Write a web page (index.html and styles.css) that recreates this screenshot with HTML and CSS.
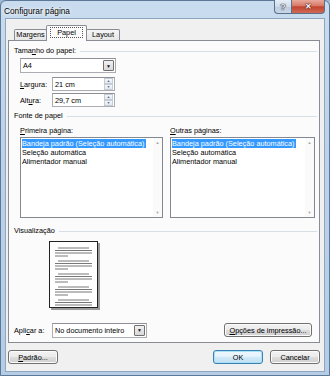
FILE: index.html
```html
<!DOCTYPE html>
<html lang="pt">
<head>
  <meta charset="UTF-8" />
  <title>Configurar página</title>
  <link rel="stylesheet" href="styles.css">
</head>
<body>
  <div class="window">
    <div class="titlebar">
      <span class="title">Configurar página</span>
      <div class="caption">
        <span class="cap help">?</span>
        <span class="cap close">✕</span>
      </div>
    </div>

    <div class="client">
      <div class="tabs">
        <span class="tab">Margens</span>
        <span class="tab active"><span class="focus">Papel</span></span>
        <span class="tab">Layout</span>
      </div>

      <div class="panel">
        <div class="group-title"><span>Tama<u>n</u>ho do papel:</span><i></i></div>
        <div class="indent">
          <div class="combo size-combo">
            <span class="value">A4</span>
            <span class="drop">▼</span>
          </div>
          <div class="field-row first">
            <span class="field-label"><u>L</u>argura:</span>
            <div class="spin">
              <span class="value">21 cm</span>
              <span class="spin-btns"><b>▲</b><b>▼</b></span>
            </div>
          </div>
          <div class="field-row">
            <span class="field-label">Alt<u>u</u>ra:</span>
            <div class="spin">
              <span class="value">29,7 cm</span>
              <span class="spin-btns"><b>▲</b><b>▼</b></span>
            </div>
          </div>
        </div>

        <div class="group-title source"><span>Fonte de papel</span><i></i></div>
        <div class="lists">
          <div class="list-col left-col">
            <span class="list-label"><u>P</u>rimeira página:</span>
            <div class="listbox">
              <ul>
                <li><span class="sel">Bandeja padrão (Seleção automática)</span></li>
                <li>Seleção automática</li>
                <li>Alimentador manual</li>
              </ul>
              <div class="scroll"><b>▲</b><b>▼</b></div>
            </div>
          </div>
          <div class="list-col right-col">
            <span class="list-label"><u>O</u>utras páginas:</span>
            <div class="listbox">
              <ul>
                <li><span class="sel">Bandeja padrão (Seleção automática)</span></li>
                <li>Seleção automática</li>
                <li>Alimentador manual</li>
              </ul>
              <div class="scroll"><b>▲</b><b>▼</b></div>
            </div>
          </div>
        </div>

        <div class="group-title preview-title"><span>Visualização</span><i></i></div>
        <div class="preview">
          <svg width="52" height="70" viewBox="0 0 52 70">
            <rect x="2" y="2" width="49" height="67" fill="#9a9a9a" />
            <rect x="0.5" y="0.5" width="48" height="66" fill="#fff" stroke="#222" />
            <g stroke="#555" stroke-width="0.8">
              <path d="M9 7H40M6 9.5H43M6 12H43M6 15H19" />
              <path d="M9 20H40M6 22.5H43M6 25H43M6 28H19" />
              <path d="M9 33H40M6 35.5H43M6 38H43M6 41H19" />
              <path d="M9 46H40M6 48.5H43M6 51H43M6 54H19" />
              <path d="M9 59H40M6 61.5H43M6 64H43" />
            </g>
          </svg>
        </div>

        <div class="apply-row">
          <span class="field-label">Apli<u>c</u>ar a:</span>
          <div class="combo apply-combo">
            <span class="value">No documento inteiro</span>
            <span class="drop">▼</span>
          </div>
          <span class="btn options"><u>O</u>pções de impressão...</span>
        </div>
      </div>

      <div class="buttons">
        <span class="btn"><u>P</u>adrão...</span>
        <span class="btn default ok">OK</span>
        <span class="btn">Cancelar</span>
      </div>
    </div>
  </div>
</body>
</html>
```

FILE: styles.css
```css
* {
  box-sizing: border-box;
}

body {
  margin: 0;
  width: 330px;
  height: 376px;
  font-family: "Liberation Sans", Arial, sans-serif;
  font-size: 7.3px;
  color: #000;
  background: #9fb8d4;
}

u {
  text-decoration: underline;
  text-underline-offset: 1px;
}

.window {
  width: 330px;
  height: 376px;
  display: flex;
  flex-direction: column;
  border: 1px solid #5d7896;
  border-radius: 6px 6px 0 0;
  background: linear-gradient(180deg, #c9dcef 0%, #bcd2ea 40%, #b4cce6 100%);
}

.titlebar {
  height: 17px;
  display: flex;
  justify-content: space-between;
  flex-shrink: 0;
}

.title {
  padding: 5px 0 0 3px;
  font-size: 8.3px;
  line-height: 10px;
  text-shadow: 0 0 4px #fff, 0 0 2px #fff;
}

.caption {
  display: flex;
  margin-right: 4px;
  margin-top: -1px;
}

.cap {
  height: 14px;
  display: flex;
  align-items: center;
  justify-content: center;
  border: 1px solid #5a6f88;
  border-top: none;
  font-weight: bold;
}

.help {
  width: 17px;
  border-right: none;
  border-radius: 0 0 0 4px;
  background: linear-gradient(180deg, #e6eef7 0%, #d0dceb 50%, #bccbdd 51%, #c9d7e8 100%);
  color: #e8eef5;
  font-size: 9px;
  text-shadow: 0 0 1px #333, 0 0 1px #333, 0 0 1px #333;
}

.close {
  width: 34px;
  border-radius: 0 0 4px 0;
  background: linear-gradient(180deg, #e9a99b 0%, #d77866 45%, #c14430 52%, #d26a55 100%);
  color: #fff;
  font-size: 8px;
  text-shadow: 0 0 1px #4a0f08, 0 0 1px #4a0f08, 0 0 1px #4a0f08;
}

.client {
  flex: 1;
  margin: 0 4px 3px 4px;
  display: flex;
  flex-direction: column;
  padding: 6px 4px 7px 2px;
  border: 1px solid #90a6bf;
  background: #f0f0f0;
}

.tabs {
  height: 15px;
  display: flex;
  align-items: flex-end;
  padding-left: 6px;
  flex-shrink: 0;
}

.tab {
  height: 11px;
  line-height: 10px;
  text-align: center;
  border: 1px solid #898c95;
  border-bottom: none;
  border-radius: 2px 2px 0 0;
  background: linear-gradient(180deg, #f6f6f6 0%, #e6e6e6 100%);
}

.tab:first-child {
  width: 33px;
}

.tab:last-child {
  width: 34px;
  margin-left: -1px;
}

.tab.active {
  position: relative;
  z-index: 1;
  width: 41px;
  height: 16px;
  margin-left: -1px;
  margin-bottom: -1px;
  padding-top: 2px;
  background: #fbfbfb;
}

.focus {
  display: inline-block;
  padding: 0 6px;
  line-height: 9px;
  outline: 1px dotted #555;
  outline-offset: 0;
}

.panel {
  flex: 1;
  display: flex;
  flex-direction: column;
  padding: 5px 2px 5px 5px;
  border: 1px solid #898c95;
  background: #fbfbfb;
}

.group-title {
  display: flex;
  align-items: center;
  height: 10px;
  line-height: 10px;
}

.group-title i {
  flex: 1;
  height: 1px;
  margin-left: 4px;
  background: #d5dfe5;
}

.indent {
  padding-left: 6px;
}

.combo,
.spin {
  display: flex;
  align-items: center;
  border: 1px solid #abadb3;
  border-top-color: #8e9096;
  background: #fff;
}

.value {
  flex: 1;
  padding-left: 2px;
  white-space: nowrap;
}

.size-combo {
  width: 96px;
  height: 15px;
  margin-top: 2px;
}

.drop {
  width: 11px;
  height: 11px;
  margin-right: 1px;
  display: flex;
  align-items: center;
  justify-content: center;
  border: 1px solid #707070;
  border-radius: 1px;
  background: linear-gradient(180deg, #f2f2f2 0%, #e4e4e4 50%, #d8d8d8 100%);
  font-size: 5px;
  color: #111;
}

.field-row {
  display: flex;
  align-items: center;
  height: 14px;
  margin-top: 2px;
}

.field-row.first {
  margin-top: 4px;
}

.field-label {
  width: 32px;
}

.spin {
  width: 63px;
  height: 14px;
}

.spin-btns {
  width: 9px;
  height: 12px;
  margin-right: 1px;
  display: flex;
  flex-direction: column;
}

.spin-btns b {
  flex: 1;
  display: flex;
  align-items: center;
  justify-content: center;
  border: 1px solid #c4ccd6;
  background: linear-gradient(180deg, #f5f7fa, #e3e8ee);
  font-size: 3.5px;
  color: #4b6a8e;
}

.group-title.source {
  margin-top: 4px;
}

.lists {
  display: flex;
  margin-top: 5px;
}

.list-col {
  display: flex;
  flex-direction: column;
}

.left-col {
  width: 143px;
  margin-left: 6px;
}

.right-col {
  width: 145px;
  margin-left: 7px;
}

.list-label {
  height: 10px;
  line-height: 10px;
  margin-bottom: 1px;
}

.listbox {
  height: 81px;
  display: flex;
  border: 1px solid #828790;
  background: #fff;
}

.listbox ul {
  flex: 1;
  margin: 0;
  padding: 1px 0 0 1px;
  list-style: none;
}

.listbox li {
  height: 9px;
  line-height: 9px;
  white-space: nowrap;
}

.sel {
  display: inline-block;
  padding-right: 1px;
  background: #3399ff;
  color: #fff;
}

.scroll {
  width: 9px;
  display: flex;
  flex-direction: column;
  justify-content: space-between;
  padding: 2px 0;
  background: #fafafa;
}

.scroll b {
  text-align: center;
  font-size: 4px;
  color: #a3a3a3;
}

.preview-title {
  margin-top: 8px;
}

.preview {
  margin: 5px 0 0 35px;
  height: 70px;
}

.preview svg {
  display: block;
}

.apply-row {
  display: flex;
  align-items: center;
  height: 14px;
  margin-top: 12px;
}

.apply-row .field-label {
  width: 38px;
}

.apply-combo {
  width: 95px;
  height: 15px;
}

.btn {
  height: 14px;
  display: flex;
  align-items: center;
  justify-content: center;
  border: 1px solid #707070;
  border-radius: 3px;
  background: linear-gradient(180deg, #f2f2f2 0%, #ebebeb 48%, #dddddd 52%, #cfcfcf 100%);
  box-shadow: inset 0 0 0 1px #fbfbfb;
  white-space: nowrap;
}

.options {
  width: 88px;
  margin-left: auto;
  margin-right: 5px;
}

.buttons {
  display: flex;
  margin-top: 7px;
  flex-shrink: 0;
}

.buttons .btn {
  width: 50px;
}

.buttons .ok {
  margin-left: auto;
  margin-right: 7px;
}

.btn.default {
  border-color: #3c7fb1;
  box-shadow: inset 0 0 0 1px #a8e2f8;
  background: linear-gradient(180deg, #eef8fd 0%, #e3f2fb 48%, #d0e9f8 52%, #c2e0f3 100%);
}
```
